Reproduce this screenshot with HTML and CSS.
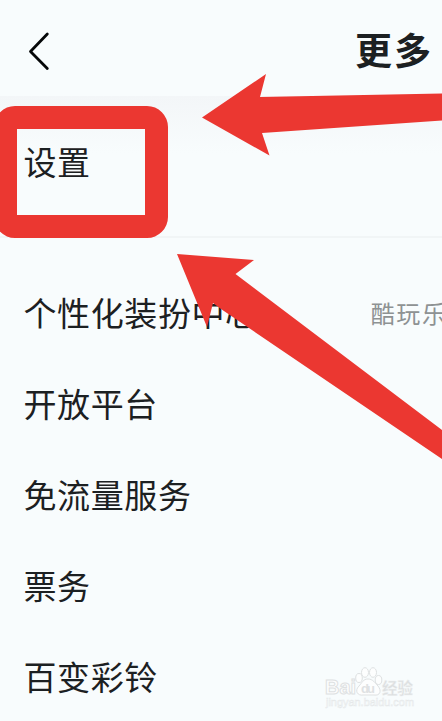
FILE: index.html
```html
<!DOCTYPE html>
<html lang="zh-CN">
<head>
<meta charset="utf-8">
<title>更多</title>
<link rel="stylesheet" href="styles.css">
</head>
<body>
<main class="screen">
  <header class="topbar">
    <svg class="back" width="22" height="40" viewBox="0 0 22 40"><path d="M19.300 3 2.500 20.500l16.800 17"/></svg>
    <h1 class="title">更多</h1>
  </header>
  <section class="settings"><span class="label">设置</span></section>
  <ul class="list">
    <li class="row"><span class="label">个性化装扮中心</span><span class="hint">酷玩乐</span></li>
    <li class="row"><span class="label">开放平台</span></li>
    <li class="row"><span class="label">免流量服务</span></li>
    <li class="row"><span class="label">票务</span></li>
    <li class="row"><span class="label">百变彩铃</span></li>
  </ul>
  <div class="highlight"></div>
  <svg class="arrows" width="442" height="721" viewBox="0 0 442 721">
    <path d="M202 117.500 266 74 260 97 442 93.500V120.500L262 133 269.500 155.500Z"/>
    <path d="M177 254 254 260 235.500 274 442 430V459L221 309 213 303 207 327Z"/>
  </svg>
  <svg class="watermark" width="102" height="50" viewBox="0 0 102 50">
    <g class="brand">
      <text x="4" y="28" font-size="20" textLength="31" lengthAdjust="spacingAndGlyphs">Bai</text>
      <ellipse cx="38" cy="12" rx="3.300" ry="4.500"/>
      <ellipse cx="44" cy="6.500" rx="3.500" ry="4.800"/>
      <ellipse cx="52" cy="6.500" rx="3.500" ry="4.800"/>
      <ellipse cx="57.500" cy="14" rx="3.300" ry="4.500"/>
      <path d="M47 13c-5 0-6 4-9 7-5 5-1 10 4 9h11c6 1 8-4 4-9-3-3-5-7-10-7Z"/>
      <text class="du" x="40" y="27" font-size="13" textLength="14">du</text>
      <text class="cn" x="61" y="27.500" font-size="15.500">经验</text>
    </g>
    <text class="url" x="5" y="40" font-size="11" textLength="88" lengthAdjust="spacingAndGlyphs">jingyan.baidu.com</text>
  </svg>
</main>
</body>
</html>
```
FILE: styles.css
```css
body {
  margin: 0;
  background: #f8fcfd;
  color: #1c2022;
  font-family: "Noto Sans CJK SC", sans-serif;
}

.screen {
  position: relative;
  width: 442px;
  height: 721px;
  overflow: hidden;
}

.topbar {
  box-sizing: border-box;
  height: 96px;
  padding: 6px 10px 0 28px;
  display: flex;
  align-items: center;
  justify-content: space-between;
}

.back {
  fill: none;
  stroke: #050708;
  stroke-width: 2.8;
  stroke-linecap: round;
  stroke-linejoin: round;
  margin-bottom: 1px;
}

.title {
  margin: 0 -1px 4px 0;
  font-size: 37px;
  line-height: 44px;
  font-weight: 700;
  letter-spacing: 2px;
}

.settings {
  box-sizing: border-box;
  height: 142px;
  padding: 0 24px 11px 23.500px;
  display: flex;
  align-items: center;
  border-bottom: 2px solid #f1f5f6;
  background: linear-gradient(#f3f6f8, #f8fcfd 58px);
}

.label {
  font-size: 33px;
  line-height: 40px;
  letter-spacing: 0.6px;
  white-space: nowrap;
}

.list {
  margin: 0;
  padding: 28px 0 0 23.500px;
  list-style: none;
}

.row {
  height: 91px;
  display: flex;
  align-items: center;
}

.hint {
  flex: none;
  margin-left: 112px;
  margin-top: 2px;
  color: #8e9293;
  font-size: 24px;
  line-height: 30px;
  letter-spacing: 1.6px;
  white-space: nowrap;
}

.highlight {
  position: absolute;
  left: -6px;
  top: 106px;
  box-sizing: border-box;
  width: 174px;
  height: 132px;
  border: 23px solid #eb3731;
  border-radius: 21px;
}

.arrows {
  position: absolute;
  left: 0;
  top: 0;
  fill: #eb3731;
}

.watermark {
  position: absolute;
  left: 321px;
  top: 666px;
  font-family: "Liberation Sans", "Noto Sans CJK SC", sans-serif;
}

.brand {
  fill: #fdfefe;
  stroke: #dee1e2;
  stroke-width: 1;
  font-weight: 700;
}

.brand .du {
  fill: #dfe2e3;
  stroke: none;
}

.brand .cn {
  fill: #dcdfe0;
  stroke: #eff1f2;
  stroke-width: 0.4;
}

.url {
  fill: #fbfdfd;
  stroke: #e5e8e9;
  stroke-width: 0.5;
}
```
